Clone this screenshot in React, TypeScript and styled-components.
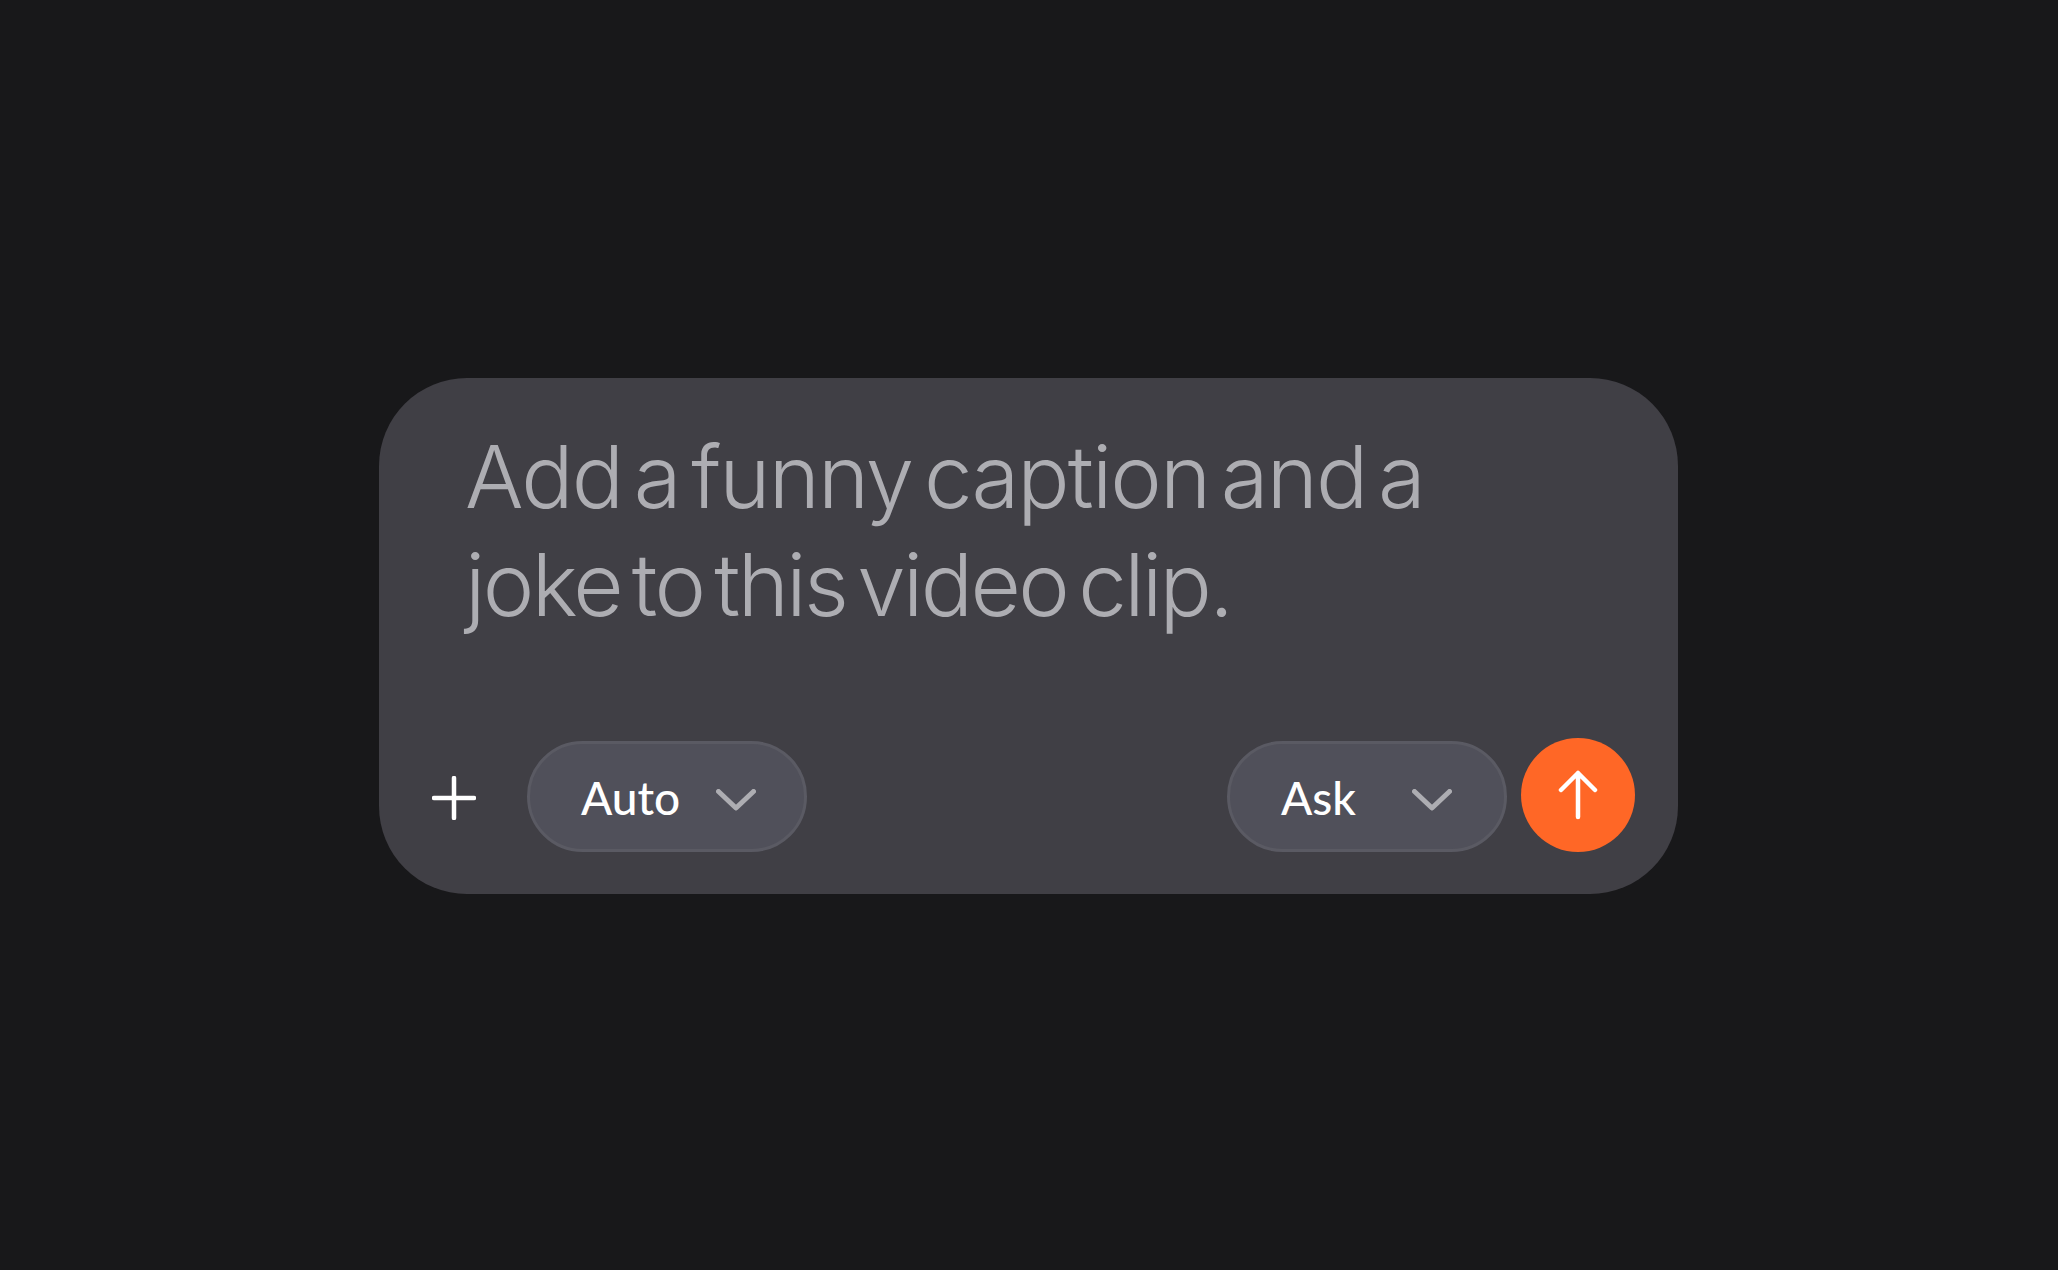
import React from "react";
import styled, { createGlobalStyle } from "styled-components";

const Global = createGlobalStyle`
  html, body {
    margin: 0;
    padding: 0;
    background: #ffffff;
  }
`;

const Page = styled.div`
  box-sizing: border-box;
  width: 2058px;
  height: 1270px;
  padding: 378px 380px 0 379px;
  background: #18181a;
`;

const Card = styled.div`
  box-sizing: border-box;
  width: 1299px;
  height: 516px;
  padding: 45px 43px 42px 53px;
  display: flex;
  flex-direction: column;
  justify-content: space-between;
  background: #403f45;
  border-radius: 88px;
`;

const Prompt = styled.div`
  padding-left: 33px;
  width: 1100px;
  font-family: Inter, "Liberation Sans", sans-serif;
  font-weight: 300;
  font-size: 87px;
  line-height: 108px;
  word-spacing: -11px;
  color: #adadb2;
`;

const PromptLine = styled.div<{ $tracking: number }>`
  letter-spacing: ${(p) => p.$tracking}px;
  white-space: nowrap;
`;

const Toolbar = styled.div`
  display: flex;
  align-items: flex-end;
`;

const AddButton = styled.div`
  box-sizing: border-box;
  width: 44px;
  height: 111px;
  padding-top: 3px;
  margin-right: 51px;
  display: flex;
  align-items: center;
  justify-content: center;
  color: #ffffff;
`;

const Spacer = styled.div`
  flex: 1;
`;

const Pill = styled.div<{ $end?: boolean }>`
  box-sizing: border-box;
  width: 280px;
  height: 111px;
  padding: 0 0 0 51px;
  display: flex;
  align-items: center;
  background: #50505a;
  border: 3px solid #5a5a63;
  border-radius: 56px;
  margin-right: ${(p) => (p.$end ? "14px" : "0")};
`;

const PillLabel = styled.span<{ $width: number }>`
  font-family: Lato, "Open Sans", sans-serif;
  font-weight: 500;
  font-size: 46px;
  line-height: 1;
  color: #ffffff;
  width: ${(p) => p.$width}px;
  padding-top: 2px;
`;

const Chevron = styled.svg`
  display: block;
  margin-top: 7px;
  color: #adadb2;
`;

const SendButton = styled.div`
  width: 114px;
  height: 114px;
  display: flex;
  align-items: center;
  justify-content: center;
  background: #ff6726;
  border-radius: 50%;
  color: #ffffff;
`;

const ChevronIcon = () => (
  <Chevron width="40" height="22" viewBox="0 0 40 22" fill="none">
    <path
      d="M2.5 2.5 L20 19 L37.5 2.5"
      stroke="currentColor"
      strokeWidth="5"
      strokeLinecap="round"
      strokeLinejoin="round"
    />
  </Chevron>
);

export default function App() {
  return (
    <>
      <Global />
      <Page>
        <Card>
          <Prompt>
            <PromptLine $tracking={-1.9}>Add a funny caption and a</PromptLine>
            <PromptLine $tracking={-2.6}>joke to this video clip.</PromptLine>
          </Prompt>
          <Toolbar>
            <AddButton>
              <svg width="44" height="44" viewBox="0 0 44 44" fill="none">
                <path
                  d="M22 2 V42 M2 22 H42"
                  stroke="currentColor"
                  strokeWidth="4.5"
                  strokeLinecap="round"
                />
              </svg>
            </AddButton>
            <Pill>
              <PillLabel $width={135}>Auto</PillLabel>
              <ChevronIcon />
            </Pill>
            <Spacer />
            <Pill $end>
              <PillLabel $width={131}>Ask</PillLabel>
              <ChevronIcon />
            </Pill>
            <SendButton>
              <svg width="40" height="50" viewBox="0 0 40 50" fill="none">
                <path
                  d="M20 47 V3 M3 20 L20 3 L37 20"
                  stroke="currentColor"
                  strokeWidth="4.5"
                  strokeLinecap="round"
                  strokeLinejoin="round"
                />
              </svg>
            </SendButton>
          </Toolbar>
        </Card>
      </Page>
    </>
  );
}
